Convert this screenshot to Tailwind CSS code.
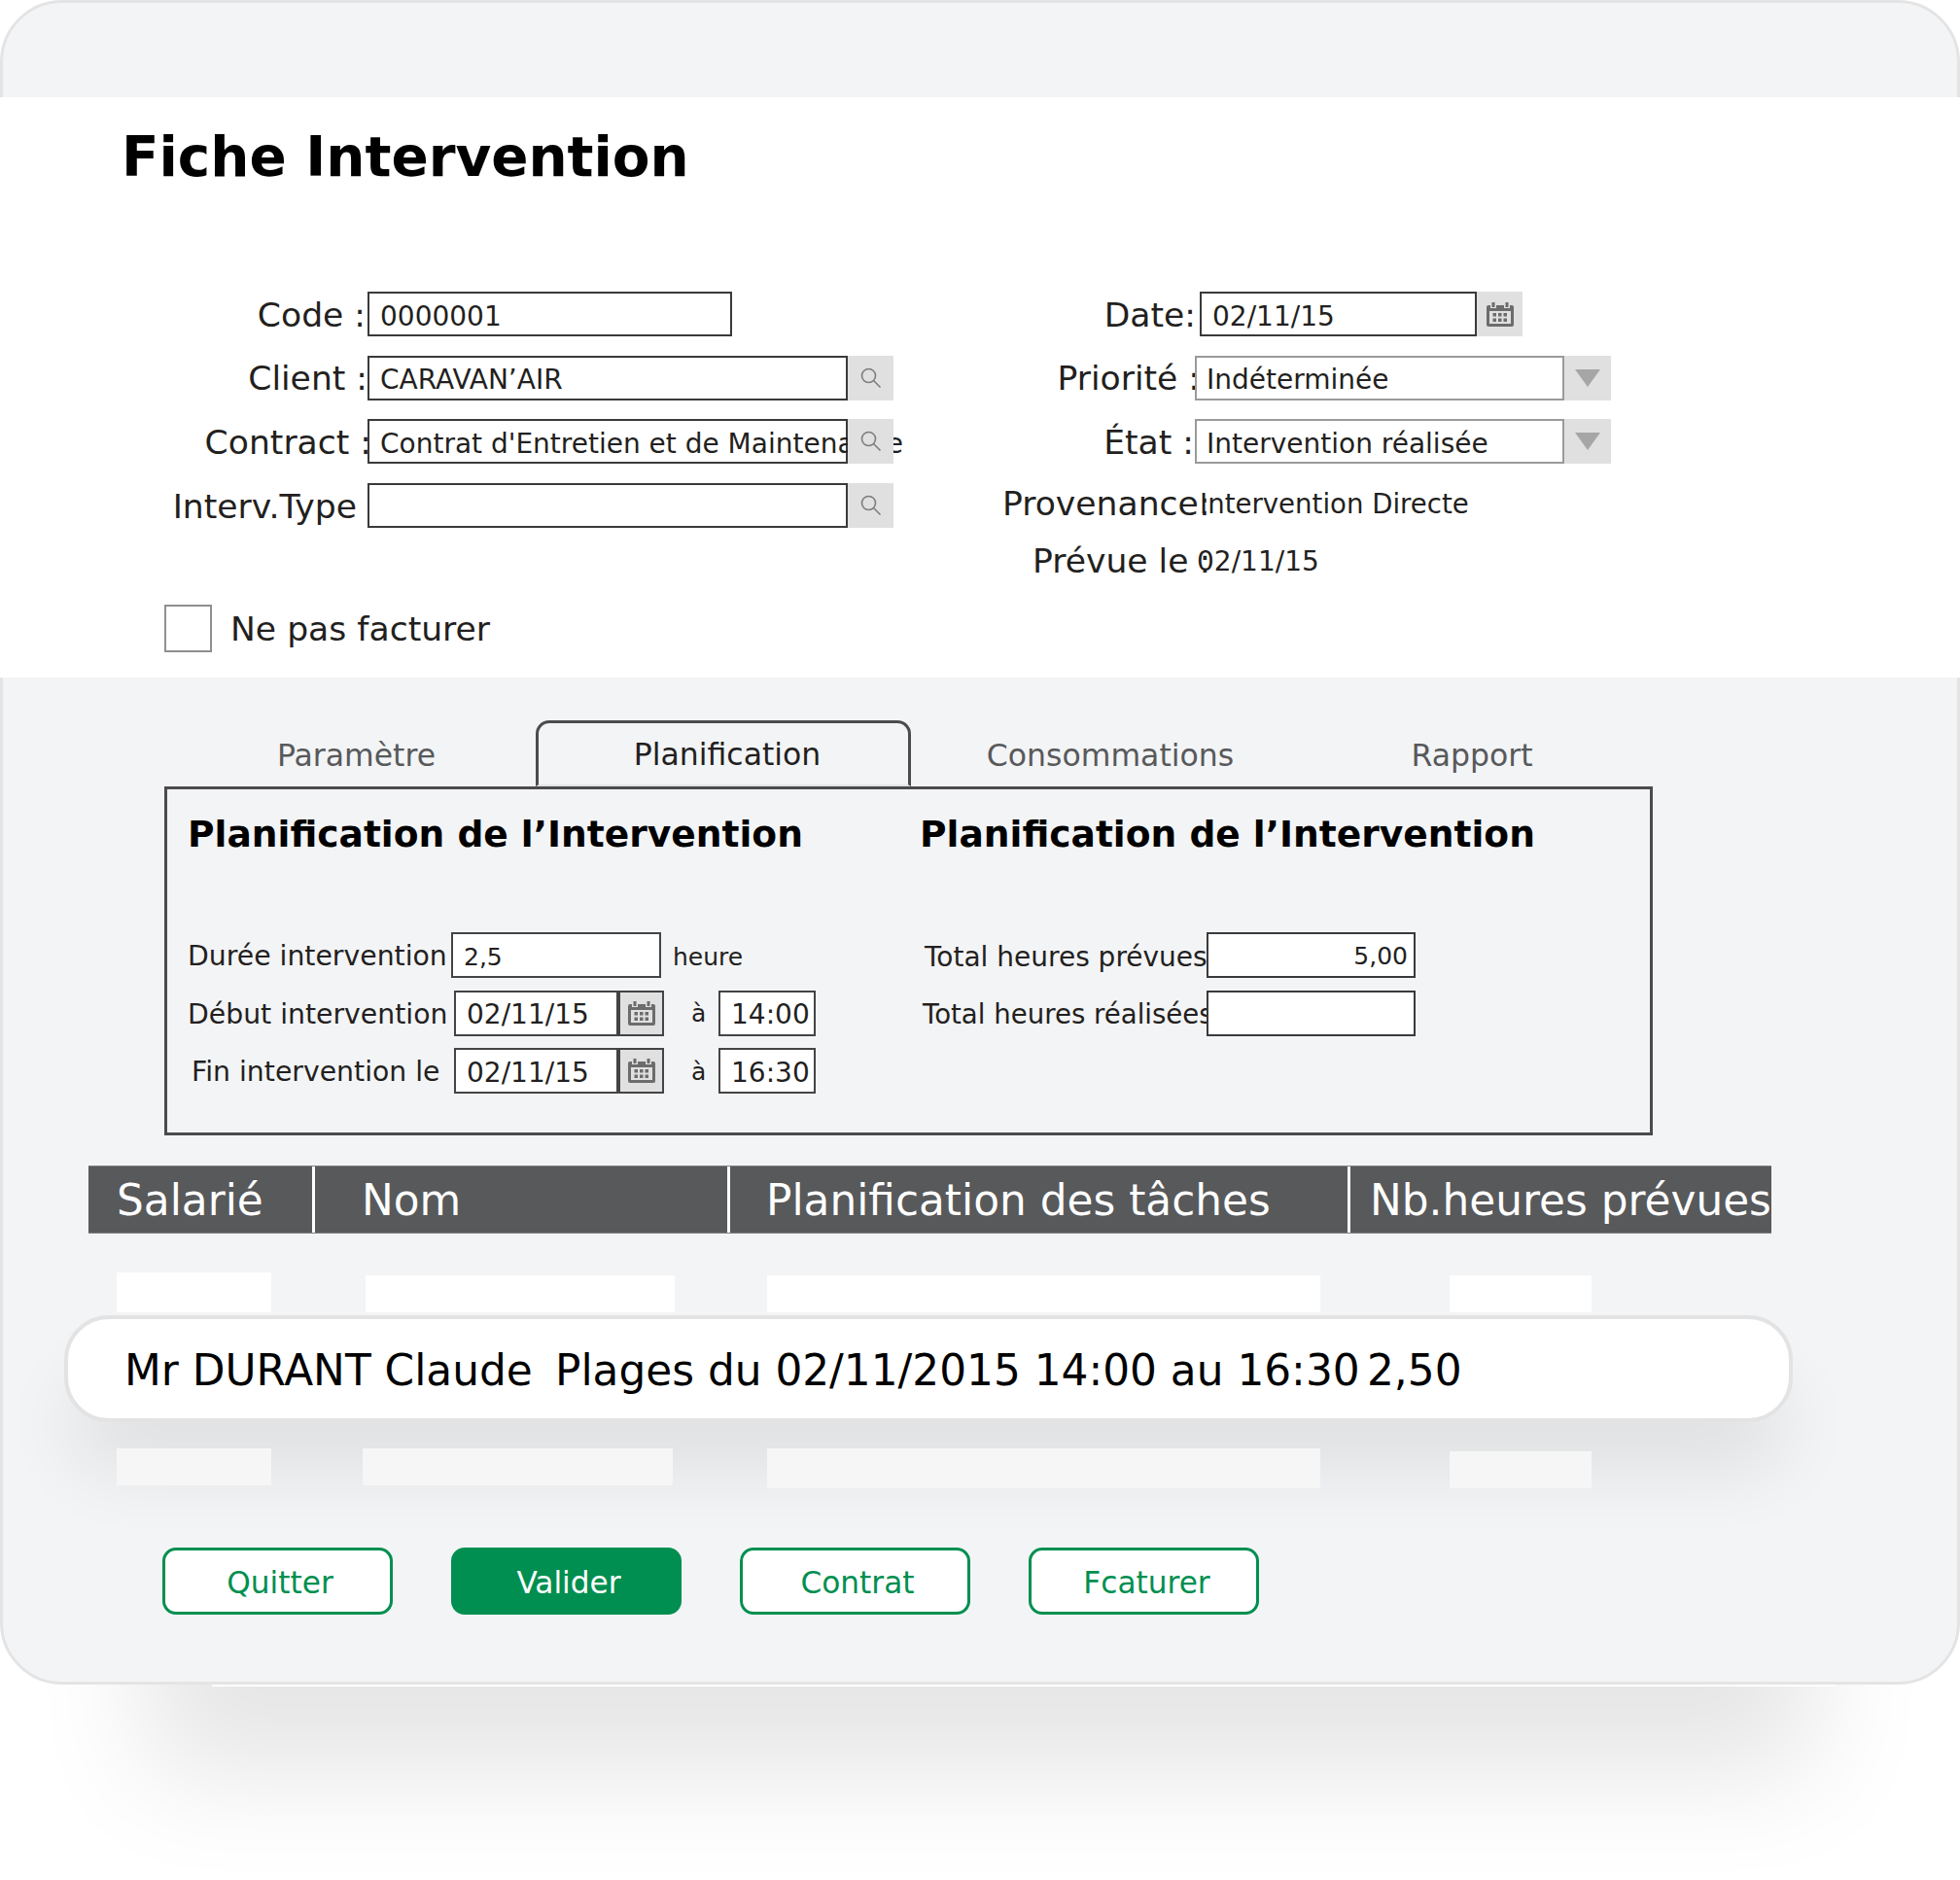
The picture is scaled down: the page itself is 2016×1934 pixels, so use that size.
<!DOCTYPE html>
<html lang="fr">
<head>
  <meta charset="UTF-8" />
  <title>Fiche Intervention</title>
  <script src="https://cdn.jsdelivr.net/npm/@tailwindcss/browser@4"></script>
</head>
<body class="bg-white">
  <div class="w-[2016px] min-h-[1934px] bg-white font-['DejaVu_Sans',sans-serif] text-[#231f20]">

    <!-- carte principale -->
    <div class="h-[1733px] rounded-[64px] border-[3px] border-[#e4e4e4] bg-[#f3f4f6] pt-[97px] shadow-[0_242px_110px_-150px_rgba(0,0,0,0.1)]">

      <!-- en-tete -->
      <div class="-mx-[3px] h-[597px] bg-white">
        <h1 class="pl-[125px] pt-[29px] text-[56.4px] leading-[66px] font-bold text-black">Fiche Intervention</h1>

        <div class="mt-[105px] flex">
          <!-- colonne gauche -->
          <div class="w-[1000px]">
            <div class="flex flex-col gap-[19.67px]">
              <div class="flex h-[46px] items-center">
                <div class="w-[378px] pt-[3px] pr-[2px] text-right text-[34.6px] whitespace-nowrap">Code :</div>
                <div class="flex h-[46px] w-[375px] items-center border-2 border-[#3a3a3c] pt-[5px] pl-[11px] text-[28px]">0000001</div>
              </div>
              <div class="flex h-[46px] items-center">
                <div class="flex w-[378px] justify-end pt-[3px] text-[34.6px] whitespace-nowrap"><span>Client :</span></div>
                <div class="flex h-[46px] w-[494px] items-center border-2 border-[#3a3a3c] pt-[5px] pl-[11px] text-[28px]">CARAVAN’AIR</div>
                <div class="flex h-[46px] w-[47px] items-center justify-center bg-[#e0e0e0]">
                  <svg width="24" height="24" viewBox="0 0 24 24" fill="none" stroke="#7d7d7d" stroke-width="1.6"><circle cx="9.5" cy="9.5" r="7"/><path d="M14.5 14.5l7 7"/></svg>
                </div>
              </div>
              <div class="flex h-[46px] items-center">
                <div class="flex w-[378px] justify-end pt-[3px] text-[34.6px] whitespace-nowrap"><span class="-mr-[4px]">Contract :</span></div>
                <div class="flex h-[46px] w-[494px] items-center border-2 border-[#3a3a3c] pt-[5px] pl-[11px] text-[28px] whitespace-nowrap">Contrat d'Entretien et de Maintenance</div>
                <div class="relative flex h-[46px] w-[47px] items-center justify-center bg-[#e0e0e0]">
                  <svg width="24" height="24" viewBox="0 0 24 24" fill="none" stroke="#7d7d7d" stroke-width="1.6"><circle cx="9.5" cy="9.5" r="7"/><path d="M14.5 14.5l7 7"/></svg>
                </div>
              </div>
              <div class="flex h-[46px] items-center">
                <div class="w-[378px] pt-[3px] pr-[11px] text-right text-[34.6px] whitespace-nowrap">Interv.Type</div>
                <div class="h-[46px] w-[494px] border-2 border-[#3a3a3c]"></div>
                <div class="flex h-[46px] w-[47px] items-center justify-center bg-[#e0e0e0]">
                  <svg width="24" height="24" viewBox="0 0 24 24" fill="none" stroke="#7d7d7d" stroke-width="1.6"><circle cx="9.5" cy="9.5" r="7"/><path d="M14.5 14.5l7 7"/></svg>
                </div>
              </div>
            </div>
            <div class="mt-[77px] ml-[169px] flex items-center">
              <div class="h-[49px] w-[49px] border-2 border-[#8f8f8f]"></div>
              <div class="ml-[19px] pt-[2px] text-[34.6px]">Ne pas facturer</div>
            </div>
          </div>

          <!-- colonne droite -->
          <div>
            <div class="flex h-[46px] items-center">
              <div class="flex w-[234px] justify-end pt-[3px] text-[34.6px] whitespace-nowrap"><span class="mr-[4px]">Date:</span></div>
              <div class="flex h-[46px] w-[285px] items-center border-2 border-[#3a3a3c] pt-[5px] pl-[11px] text-[28px]">02/11/15</div>
              <div class="flex h-[46px] w-[47px] items-center justify-center bg-[#e0e0e0]">
                <svg width="28" height="25" viewBox="0 0 28 25"><rect x="0" y="3" width="28" height="22" rx="2" fill="#6c6c6c"/><rect x="3" y="9" width="22" height="13" fill="#e0e0e0"/><rect x="4" y="3" width="6" height="3" fill="#e0e0e0"/><rect x="18" y="3" width="6" height="3" fill="#e0e0e0"/><rect x="5.5" y="0" width="3" height="5" fill="#6c6c6c"/><rect x="19.5" y="0" width="3" height="5" fill="#6c6c6c"/><g fill="#6c6c6c"><rect x="6.5" y="11" width="3.5" height="3.5"/><rect x="12" y="11" width="3.5" height="3.5"/><rect x="17.5" y="11" width="3.5" height="3.5"/><rect x="6.5" y="16.5" width="3.5" height="3.5"/><rect x="12" y="16.5" width="3.5" height="3.5"/><rect x="17.5" y="16.5" width="3.5" height="3.5"/></g></svg>
              </div>
            </div>
            <div class="mt-[19.67px] flex h-[46px] items-center">
              <div class="flex w-[229px] justify-end pt-[3px] text-[34.6px] whitespace-nowrap"><span class="-mr-[5px]">Priorité :</span></div>
              <div class="relative flex h-[46px] w-[380px] items-center border-2 border-[#9a9a9a] bg-white pt-[5px] pl-[10px] text-[28px]">Indéterminée</div>
              <div class="flex h-[46px] w-[48px] items-center justify-center bg-[#e0e0e0]">
                <svg width="26" height="18" viewBox="0 0 26 18"><path d="M0 0h26L13 18z" fill="#a6a6a6"/></svg>
              </div>
            </div>
            <div class="mt-[19.67px] flex h-[46px] items-center">
              <div class="flex w-[229px] justify-end pt-[3px] text-[34.6px] whitespace-nowrap"><span class="mr-[1px]">État :</span></div>
              <div class="relative flex h-[46px] w-[380px] items-center border-2 border-[#9a9a9a] bg-white pt-[5px] pl-[10px] text-[28px]">Intervention réalisée</div>
              <div class="flex h-[46px] w-[48px] items-center justify-center bg-[#e0e0e0]">
                <svg width="26" height="18" viewBox="0 0 26 18"><path d="M0 0h26L13 18z" fill="#a6a6a6"/></svg>
              </div>
            </div>
            <div class="mt-[17px] flex h-[46px] items-center pl-[31px]">
              <div class="w-[203px] pt-[3px] text-[34.6px] whitespace-nowrap">Provenance:</div>
              <div class="pt-[3px] text-[27.6px] whitespace-nowrap">Intervention Directe</div>
            </div>
            <div class="mt-[13px] flex h-[46px] items-center pl-[62px]">
              <div class="w-[169px] pt-[4px] text-[34.6px] whitespace-nowrap">Prévue le :</div>
              <div class="pt-[4px] text-[28px] whitespace-nowrap">02/11/15</div>
            </div>
          </div>
        </div>
      </div>

      <!-- partie basse -->
      <div class="-mx-[3px]">
        <!-- onglets -->
        <div class="mt-[44px] ml-[181px] flex h-[68px] text-[31.5px] text-[#58595b]">
          <div class="flex w-[370px] items-center justify-center pt-[5px] pl-[1px]">Paramètre</div>
          <div class="flex w-[386px] items-center justify-center rounded-t-[14px] border-[3px] border-b-2 border-[#4b4b4d] border-b-[#e3e4e6] pt-[3px] pl-[8px] text-[#231f20]">Planification</div>
          <div class="flex w-[410px] items-center justify-center pt-[5px]">Consommations</div>
          <div class="flex w-[334px] items-center justify-center pt-[5px]">Rapport</div>
        </div>

        <!-- panneau planification -->
        <div class="ml-[169px] flex h-[359px] w-[1531px] border-[3px] border-[#4b4b4d]">
          <div class="w-[773px] pl-[21px]">
            <h2 class="mt-[23px] text-[37.6px] leading-[46px] font-bold text-black">Planification de l’Intervention</h2>
            <div class="mt-[78px] flex flex-col gap-[12.5px]">
              <div class="flex h-[47px] items-center">
                <div class="w-[271px] pt-[4px] text-[28.3px] whitespace-nowrap">Durée intervention</div>
                <div class="flex h-[47px] w-[216px] items-center border-2 border-[#444446] bg-white pt-[4px] pl-[11px] text-[25px]">2,5</div>
                <div class="ml-[12px] pt-[4px] text-[25px]">heure</div>
              </div>
              <div class="flex h-[47px] items-center">
                <div class="w-[274px] pt-[4px] text-[28.3px] whitespace-nowrap">Début intervention</div>
                <div class="flex h-[47px] w-[169px] items-center border-2 border-[#444446] bg-white pt-[4px] pl-[11px] text-[28px]">02/11/15</div>
                <div class="flex h-[47px] w-[47px] items-center justify-center border-2 border-[#444446] bg-[#e0e0e0]">
                  <svg width="28" height="25" viewBox="0 0 28 25"><rect x="0" y="3" width="28" height="22" rx="2" fill="#6c6c6c"/><rect x="3" y="9" width="22" height="13" fill="#e0e0e0"/><rect x="4" y="3" width="6" height="3" fill="#e0e0e0"/><rect x="18" y="3" width="6" height="3" fill="#e0e0e0"/><rect x="5.5" y="0" width="3" height="5" fill="#6c6c6c"/><rect x="19.5" y="0" width="3" height="5" fill="#6c6c6c"/><g fill="#6c6c6c"><rect x="6.5" y="11" width="3.5" height="3.5"/><rect x="12" y="11" width="3.5" height="3.5"/><rect x="17.5" y="11" width="3.5" height="3.5"/><rect x="6.5" y="16.5" width="3.5" height="3.5"/><rect x="12" y="16.5" width="3.5" height="3.5"/><rect x="17.5" y="16.5" width="3.5" height="3.5"/></g></svg>
                </div>
                <div class="ml-[28px] w-[28px] pt-[2px] text-[25px]">à</div>
                <div class="flex h-[47px] w-[100px] items-center border-2 border-[#444446] bg-white pt-[4px] pl-[11px] text-[28px]">14:00</div>
              </div>
              <div class="flex h-[47px] items-center">
                <div class="w-[274px] pt-[4px] pl-[4px] text-[28.3px] whitespace-nowrap">Fin intervention le</div>
                <div class="flex h-[47px] w-[169px] items-center border-2 border-[#444446] bg-white pt-[4px] pl-[11px] text-[28px]">02/11/15</div>
                <div class="flex h-[47px] w-[47px] items-center justify-center border-2 border-[#444446] bg-[#e0e0e0]">
                  <svg width="28" height="25" viewBox="0 0 28 25"><rect x="0" y="3" width="28" height="22" rx="2" fill="#6c6c6c"/><rect x="3" y="9" width="22" height="13" fill="#e0e0e0"/><rect x="4" y="3" width="6" height="3" fill="#e0e0e0"/><rect x="18" y="3" width="6" height="3" fill="#e0e0e0"/><rect x="5.5" y="0" width="3" height="5" fill="#6c6c6c"/><rect x="19.5" y="0" width="3" height="5" fill="#6c6c6c"/><g fill="#6c6c6c"><rect x="6.5" y="11" width="3.5" height="3.5"/><rect x="12" y="11" width="3.5" height="3.5"/><rect x="17.5" y="11" width="3.5" height="3.5"/><rect x="6.5" y="16.5" width="3.5" height="3.5"/><rect x="12" y="16.5" width="3.5" height="3.5"/><rect x="17.5" y="16.5" width="3.5" height="3.5"/></g></svg>
                </div>
                <div class="ml-[28px] w-[28px] pt-[2px] text-[25px]">à</div>
                <div class="flex h-[47px] w-[100px] items-center border-2 border-[#444446] bg-white pt-[4px] pl-[11px] text-[28px]">16:30</div>
              </div>
            </div>
          </div>
          <div>
            <h2 class="mt-[23px] pl-[1px] text-[37.6px] leading-[46px] font-bold text-black">Planification de l’Intervention</h2>
            <div class="mt-[78px] flex flex-col gap-[12.5px]">
              <div class="flex h-[47px] items-center">
                <div class="w-[296px] pt-[4px] pl-[6px] text-[28px] whitespace-nowrap">Total heures prévues</div>
                <div class="relative flex h-[47px] w-[215px] items-center justify-end border-2 border-[#3a3a3c] bg-white pt-[3px] pr-[6px] text-[25px]">5,00</div>
              </div>
              <div class="flex h-[47px] items-center">
                <div class="w-[296px] pt-[4px] pl-[4px] text-[27.6px] whitespace-nowrap">Total heures réalisées</div>
                <div class="relative h-[47px] w-[215px] border-2 border-[#3a3a3c] bg-white"></div>
              </div>
            </div>
          </div>
        </div>

        <!-- tableau -->
        <div class="mt-[31px] ml-[91px] flex h-[70px] w-[1731px] items-center divide-x-[3px] divide-white border-y border-[#808082] bg-[#58595b] text-[43.8px] text-white">
          <div class="flex h-full w-[233px] items-center pt-[2px] pl-[29px]">Salarié</div>
          <div class="flex h-full w-[427px] items-center pt-[2px] pl-[48px]">Nom</div>
          <div class="flex h-full w-[638px] items-center pt-[2px] pl-[37px]">Planification des tâches</div>
          <div class="flex h-full w-[433px] items-center pt-[2px] pl-[20px] whitespace-nowrap">Nb.heures prévues</div>
        </div>

        <!-- ligne au dessus -->
        <div class="mt-[40px] ml-[120px] flex h-[41px] items-end">
          <div class="h-[41px] w-[159px] bg-white"></div>
          <div class="ml-[97px] h-[38px] w-[318px] bg-white"></div>
          <div class="ml-[95px] h-[38px] w-[569px] bg-white"></div>
          <div class="ml-[133px] h-[38px] w-[146px] bg-white"></div>
        </div>

        <!-- ligne selectionnee -->
        <div class="mt-[3px] ml-[66px] flex h-[110px] w-[1778px] items-center rounded-[46px] border-4 border-[#e3e3e3] bg-white pt-[4px] pl-[58px] text-[43.8px] text-black shadow-[0_55px_80px_-10px_rgba(0,0,0,0.09)]">
          <div class="w-[443px] whitespace-nowrap">Mr DURANT Claude</div>
          <div class="w-[835px] whitespace-nowrap">Plages du 02/11/2015 14:00 au 16:30</div>
          <div>2,50</div>
        </div>

        <!-- ligne au dessous -->
        <div class="mt-[27px] ml-[120px] flex h-[41px] items-start">
          <div class="h-[38px] w-[159px] bg-[#f6f6f6]"></div>
          <div class="ml-[94px] h-[38px] w-[319px] bg-[#f6f6f6]"></div>
          <div class="ml-[97px] h-[41px] w-[569px] bg-[#f6f6f6]"></div>
          <div class="mt-[3px] ml-[133px] h-[38px] w-[146px] bg-[#f6f6f6]"></div>
        </div>

        <!-- boutons -->
        <div class="mt-[61px] ml-[167px] flex gap-[60px] text-[31.2px] text-[#008f50]">
          <div class="flex h-[69px] w-[237px] items-center justify-center rounded-[14px] border-[3px] border-[#008f50] bg-white pt-[4px] pl-[5px]">Quitter</div>
          <div class="flex h-[69px] w-[237px] items-center justify-center rounded-[14px] border-[3px] border-[#008f50] bg-[#008f50] pt-[4px] pl-[5px] text-white">Valider</div>
          <div class="flex h-[69px] w-[237px] items-center justify-center rounded-[14px] border-[3px] border-[#008f50] bg-white pt-[4px] pl-[5px]">Contrat</div>
          <div class="flex h-[69px] w-[237px] items-center justify-center rounded-[14px] border-[3px] border-[#008f50] bg-white pt-[4px] pl-[6px]">Fcaturer</div>
        </div>
      </div>
    </div>
    <div class="ml-[218px] h-[2px] w-[1671px] bg-white"></div>
  </div>
</body>
</html>
